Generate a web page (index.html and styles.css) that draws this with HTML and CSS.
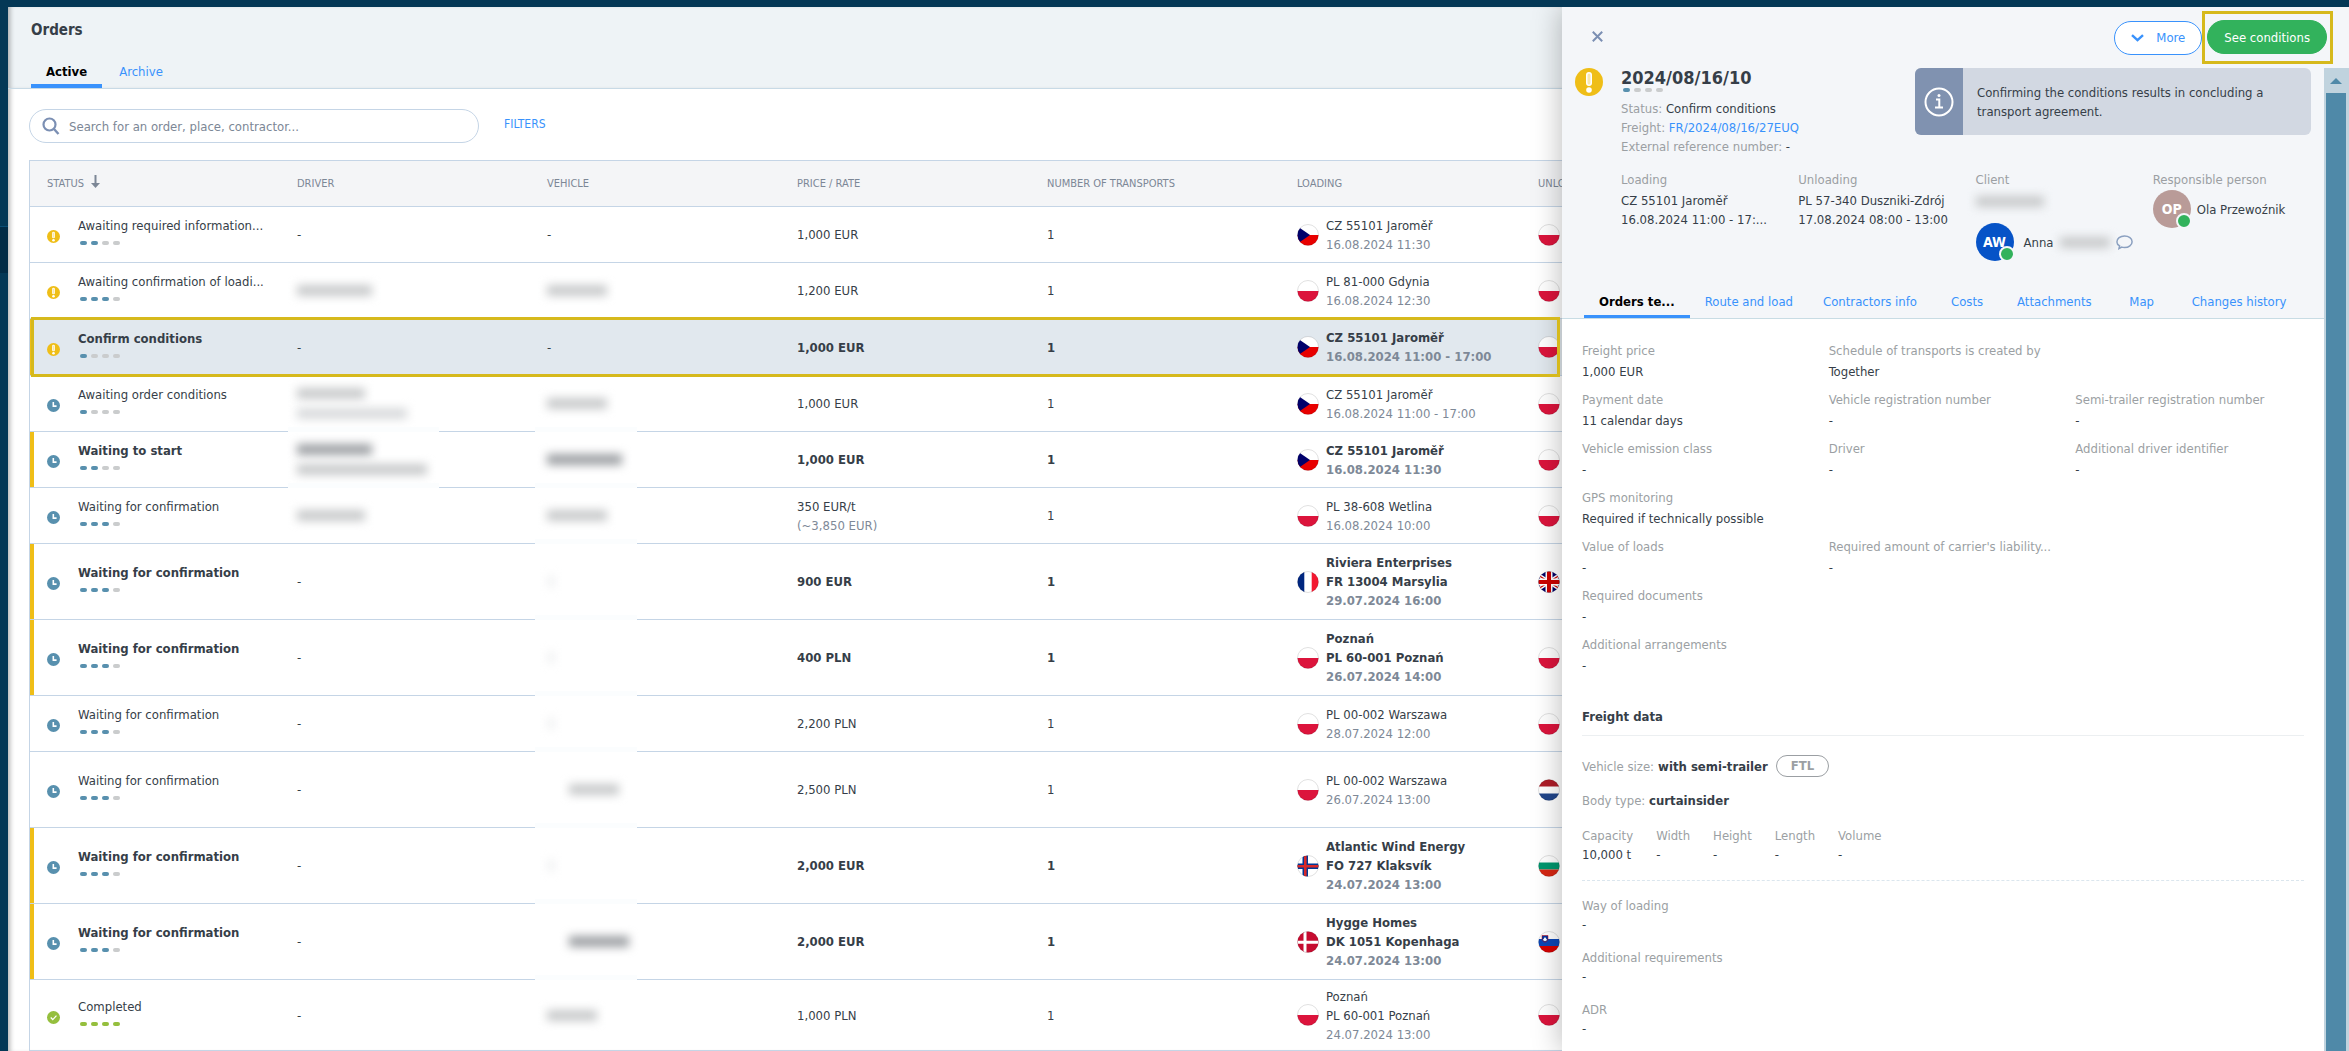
FILE: index.html
```html
<!DOCTYPE html>
<html lang="en">
<head>
    <meta charset="UTF-8">
    <meta name="viewport" content="width=device-width, initial-scale=1.0">
    <title>Orders</title>
    <link rel="stylesheet" href="styles.css">
</head>
<body>
    <!-- Shared icons and flags -->
    <svg class="sprite" aria-hidden="true">
        <defs>
            <clipPath id="round"><circle cx="11" cy="11" r="10.5"/></clipPath>
        </defs>
        <symbol id="alert" viewBox="0 0 28 28">
            <circle cx="14" cy="14" r="14" fill="#efbe17"/>
            <rect x="11" y="4" width="6" height="14" rx="3" fill="#fff"/>
            <rect x="12.500" y="5.500" width="3" height="11" rx="1.500" fill="#efbe17" opacity="0.350"/>
            <circle cx="14" cy="22" r="2.800" fill="#fff"/>
        </symbol>
        <symbol id="clock" viewBox="0 0 14 14">
            <circle cx="7" cy="7" r="7" fill="#5890ae"/>
            <path d="M6.800 3.300v4.400h3.500" fill="none" stroke="#fff" stroke-width="1.700"/>
        </symbol>
        <symbol id="done" viewBox="0 0 14 14">
            <circle cx="7" cy="7" r="7" fill="#95bf3d"/>
            <path d="M4 7l2.200 2.200L10.200 5" fill="none" stroke="#fff" stroke-width="1.300"/>
        </symbol>
        <symbol id="pl" viewBox="0 0 22 22">
            <g clip-path="url(#round)"><path fill="#fff" d="M0 0h22v11H0z"/><path fill="#dc143c" d="M0 11h22v11H0z"/></g>
            <circle cx="11" cy="11" r="10.500" fill="none" stroke="#000" stroke-opacity="0.120"/>
        </symbol>
        <symbol id="cz" viewBox="0 0 22 22">
            <g clip-path="url(#round)"><path fill="#fff" d="M0 0h22v11H0z"/><path fill="#e80000" d="M0 11h22v11H0z"/><path fill="#00006b" d="M0 2l13 9L0 20z"/></g>
            <circle cx="11" cy="11" r="10.500" fill="none" stroke="#000" stroke-opacity="0.120"/>
        </symbol>
        <symbol id="fr" viewBox="0 0 22 22">
            <g clip-path="url(#round)"><path fill="#fff" d="M0 0h22v22H0z"/><path fill="#00267f" d="M0 0h7.300v22H0z"/><path fill="#f31830" d="M14.700 0H22v22h-7.300z"/></g>
            <circle cx="11" cy="11" r="10.500" fill="none" stroke="#000" stroke-opacity="0.120"/>
        </symbol>
        <symbol id="fo" viewBox="0 0 22 22">
            <g clip-path="url(#round)"><path fill="#fff" d="M0 0h22v22H0z"/><path fill="#003897" d="M5.500 0h5.500v22H5.500zM0 8.500h22v5.500H0z"/><path fill="#d72828" d="M7 0h2.600v22H7zM0 10h22v2.600H0z"/></g>
            <circle cx="11" cy="11" r="10.500" fill="none" stroke="#000" stroke-opacity="0.120"/>
        </symbol>
        <symbol id="dk" viewBox="0 0 22 22">
            <g clip-path="url(#round)"><path fill="#c60c30" d="M0 0h22v22H0z"/><path fill="#fff" d="M6.500 0h3v22h-3zM0 9.700h22v3H0z"/></g>
            <circle cx="11" cy="11" r="10.500" fill="none" stroke="#000" stroke-opacity="0.120"/>
        </symbol>
        <symbol id="nl" viewBox="0 0 22 22">
            <g clip-path="url(#round)"><path fill="#fff" d="M0 0h22v22H0z"/><path fill="#ae1c28" d="M0 0h22v7.500H0z"/><path fill="#21468b" d="M0 14.500h22V22H0z"/></g>
            <circle cx="11" cy="11" r="10.500" fill="none" stroke="#000" stroke-opacity="0.120"/>
        </symbol>
        <symbol id="bg" viewBox="0 0 22 22">
            <g clip-path="url(#round)"><path fill="#fff" d="M0 0h22v22H0z"/><path fill="#00966e" d="M0 7.500h22v7H0z"/><path fill="#d62612" d="M0 14.500h22V22H0z"/></g>
            <circle cx="11" cy="11" r="10.500" fill="none" stroke="#000" stroke-opacity="0.120"/>
        </symbol>
        <symbol id="si" viewBox="0 0 22 22">
            <g clip-path="url(#round)"><path fill="#fff" d="M0 0h22v22H0z"/><path fill="#0c47b7" d="M0 8h22v7H0z"/><path fill="#d50000" d="M0 15h22v7H0z"/><path fill="#0033a0" stroke="#d50000" stroke-width="0.500" d="M4 4.500h6V8c0 2-3 3.200-3 3.200S4 10 4 8z"/><path fill="#fff" d="M4.800 9L7 6l2.200 3L7 10.300z"/></g>
            <circle cx="11" cy="11" r="10.500" fill="none" stroke="#000" stroke-opacity="0.120"/>
        </symbol>
        <symbol id="gb" viewBox="0 0 22 22">
            <g clip-path="url(#round)"><path fill="#006" d="M0 0h22v22H0z"/><path stroke="#fff" stroke-width="4" d="M-3 2l28 18M25 2L-3 20"/><path stroke="#c00" stroke-width="1.300" d="M-3 2l28 18M25 2L-3 20"/><path fill="#fff" d="M7.500 0h7v22h-7zM0 7.500h22v7H0z"/><path fill="#c00" d="M9 0h4v22H9zM0 9h22v4H0z"/></g>
            <circle cx="11" cy="11" r="10.500" fill="none" stroke="#000" stroke-opacity="0.120"/>
        </symbol>
    </svg>

    <aside class="side-nav"><span class="side-current"></span></aside>

    <main class="page">
        <header class="page-header">
            <h1>Orders</h1>
            <nav class="tabs">
                <a class="tab active" href="#">Active</a>
                <a class="tab" href="#">Archive</a>
            </nav>
        </header>

        <div class="toolbar">
            <label class="search">
                <svg width="18" height="18" viewBox="0 0 18 18"><circle cx="7.500" cy="7.500" r="6" fill="none" stroke="#7b8fb3" stroke-width="2.200"/><path d="M12 12l4.500 5" stroke="#7b8fb3" stroke-width="2.400"/></svg>
                <input type="text" aria-label="Search" placeholder="Search for an order, place, contractor...">
            </label>
            <a class="filters" href="#">FILTERS</a>
        </div>

        <table class="orders">
            <colgroup>
                <col class="col"><col class="col"><col class="col"><col class="col"><col class="col"><col class="col-loading"><col>
            </colgroup>
            <thead>
                <tr>
                    <th>STATUS <svg class="sort" width="11" height="14" viewBox="0 0 11 14"><path d="M5.500 0v9" stroke="#7c8796" stroke-width="2"/><path d="M1 8h9l-4.500 5z" fill="#7c8796"/></svg></th>
                    <th>DRIVER</th>
                    <th>VEHICLE</th>
                    <th>PRICE / RATE</th>
                    <th>NUMBER OF TRANSPORTS</th>
                    <th>LOADING</th>
                    <th>UNLOADING</th>
                </tr>
            </thead>
            <tbody>
                <tr>
                    <td><div class="status"><svg class="icon"><use href="#alert"/></svg><div><span>Awaiting required information...</span><div class="steps"><i class="on"></i><i class="on"></i><i></i><i></i></div></div></div></td>
                    <td>-</td>
                    <td>-</td>
                    <td>1,000 EUR</td>
                    <td>1</td>
                    <td><div class="place"><svg class="flag"><use href="#cz"/></svg><div>CZ 55101 Jaroměř<br><time>16.08.2024 11:30</time></div></div></td>
                    <td><div class="place"><svg class="flag"><use href="#pl"/></svg></div></td>
                </tr>
                <tr>
                    <td><div class="status"><svg class="icon"><use href="#alert"/></svg><div><span>Awaiting confirmation of loadi...</span><div class="steps"><i class="on"></i><i class="on"></i><i class="on"></i><i></i></div></div></div></td>
                    <td><span class="blur w75"></span></td>
                    <td><span class="blur w60"></span></td>
                    <td>1,200 EUR</td>
                    <td>1</td>
                    <td><div class="place"><svg class="flag"><use href="#pl"/></svg><div>PL 81-000 Gdynia<br><time>16.08.2024 12:30</time></div></div></td>
                    <td><div class="place"><svg class="flag"><use href="#pl"/></svg></div></td>
                </tr>
                <tr class="new selected">
                    <td><div class="status"><svg class="icon"><use href="#alert"/></svg><div><span>Confirm conditions</span><div class="steps"><i class="on"></i><i></i><i></i><i></i></div></div></div></td>
                    <td>-</td>
                    <td>-</td>
                    <td>1,000 EUR</td>
                    <td>1</td>
                    <td><div class="place"><svg class="flag"><use href="#cz"/></svg><div>CZ 55101 Jaroměř<br><time>16.08.2024 11:00 - 17:00</time></div></div></td>
                    <td><div class="place"><svg class="flag"><use href="#pl"/></svg></div></td>
                </tr>
                <tr>
                    <td><div class="status"><svg class="icon"><use href="#clock"/></svg><div><span>Awaiting order conditions</span><div class="steps"><i class="on"></i><i></i><i></i><i></i></div></div></div></td>
                    <td class="veil wide"><span class="blur w68"></span><span class="blur w110 light"></span></td>
                    <td class="veil"><span class="blur w60"></span></td>
                    <td>1,000 EUR</td>
                    <td>1</td>
                    <td><div class="place"><svg class="flag"><use href="#cz"/></svg><div>CZ 55101 Jaroměř<br><time>16.08.2024 11:00 - 17:00</time></div></div></td>
                    <td><div class="place"><svg class="flag"><use href="#pl"/></svg></div></td>
                </tr>
                <tr class="new">
                    <td><div class="status"><svg class="icon"><use href="#clock"/></svg><div><span>Waiting to start</span><div class="steps"><i class="on"></i><i class="on"></i><i></i><i></i></div></div></div></td>
                    <td class="veil wide"><span class="blur w75 dark"></span><span class="blur w130"></span></td>
                    <td class="veil"><span class="blur w75 dark"></span></td>
                    <td>1,000 EUR</td>
                    <td>1</td>
                    <td><div class="place"><svg class="flag"><use href="#cz"/></svg><div>CZ 55101 Jaroměř<br><time>16.08.2024 11:30</time></div></div></td>
                    <td><div class="place"><svg class="flag"><use href="#pl"/></svg></div></td>
                </tr>
                <tr>
                    <td><div class="status"><svg class="icon"><use href="#clock"/></svg><div><span>Waiting for confirmation</span><div class="steps"><i class="on"></i><i class="on"></i><i class="on"></i><i></i></div></div></div></td>
                    <td><span class="blur w68"></span></td>
                    <td class="veil"><span class="blur w60"></span></td>
                    <td>350 EUR/t<br><small>(~3,850 EUR)</small></td>
                    <td>1</td>
                    <td><div class="place"><svg class="flag"><use href="#pl"/></svg><div>PL 38-608 Wetlina<br><time>16.08.2024 10:00</time></div></div></td>
                    <td><div class="place"><svg class="flag"><use href="#pl"/></svg></div></td>
                </tr>
                <tr class="new tall">
                    <td><div class="status"><svg class="icon"><use href="#clock"/></svg><div><span>Waiting for confirmation</span><div class="steps"><i class="on"></i><i class="on"></i><i class="on"></i><i></i></div></div></div></td>
                    <td>-</td>
                    <td class="veil"><span class="blur dot"></span></td>
                    <td>900 EUR</td>
                    <td>1</td>
                    <td><div class="place"><svg class="flag"><use href="#fr"/></svg><div>Riviera Enterprises<br>FR 13004 Marsylia<br><time>29.07.2024 16:00</time></div></div></td>
                    <td><div class="place"><svg class="flag"><use href="#gb"/></svg></div></td>
                </tr>
                <tr class="new tall">
                    <td><div class="status"><svg class="icon"><use href="#clock"/></svg><div><span>Waiting for confirmation</span><div class="steps"><i class="on"></i><i class="on"></i><i class="on"></i><i></i></div></div></div></td>
                    <td>-</td>
                    <td class="veil"><span class="blur dot"></span></td>
                    <td>400 PLN</td>
                    <td>1</td>
                    <td><div class="place"><svg class="flag"><use href="#pl"/></svg><div>Poznań<br>PL 60-001 Poznań<br><time>26.07.2024 14:00</time></div></div></td>
                    <td><div class="place"><svg class="flag"><use href="#pl"/></svg></div></td>
                </tr>
                <tr>
                    <td><div class="status"><svg class="icon"><use href="#clock"/></svg><div><span>Waiting for confirmation</span><div class="steps"><i class="on"></i><i class="on"></i><i class="on"></i><i></i></div></div></div></td>
                    <td>-</td>
                    <td class="veil"><span class="blur dot"></span></td>
                    <td>2,200 PLN</td>
                    <td>1</td>
                    <td><div class="place"><svg class="flag"><use href="#pl"/></svg><div>PL 00-002 Warszawa<br><time>28.07.2024 12:00</time></div></div></td>
                    <td><div class="place"><svg class="flag"><use href="#pl"/></svg></div></td>
                </tr>
                <tr class="tall">
                    <td><div class="status"><svg class="icon"><use href="#clock"/></svg><div><span>Waiting for confirmation</span><div class="steps"><i class="on"></i><i class="on"></i><i class="on"></i><i></i></div></div></div></td>
                    <td>-</td>
                    <td class="veil"><span class="blur w50 indent"></span></td>
                    <td>2,500 PLN</td>
                    <td>1</td>
                    <td><div class="place"><svg class="flag"><use href="#pl"/></svg><div>PL 00-002 Warszawa<br><time>26.07.2024 13:00</time></div></div></td>
                    <td><div class="place"><svg class="flag"><use href="#nl"/></svg></div></td>
                </tr>
                <tr class="new tall">
                    <td><div class="status"><svg class="icon"><use href="#clock"/></svg><div><span>Waiting for confirmation</span><div class="steps"><i class="on"></i><i class="on"></i><i class="on"></i><i></i></div></div></div></td>
                    <td>-</td>
                    <td class="veil"><span class="blur dot"></span></td>
                    <td>2,000 EUR</td>
                    <td>1</td>
                    <td><div class="place"><svg class="flag"><use href="#fo"/></svg><div>Atlantic Wind Energy<br>FO 727 Klaksvík<br><time>24.07.2024 13:00</time></div></div></td>
                    <td><div class="place"><svg class="flag"><use href="#bg"/></svg></div></td>
                </tr>
                <tr class="new tall">
                    <td><div class="status"><svg class="icon"><use href="#clock"/></svg><div><span>Waiting for confirmation</span><div class="steps"><i class="on"></i><i class="on"></i><i class="on"></i><i></i></div></div></div></td>
                    <td>-</td>
                    <td class="veil"><span class="blur w60 indent dark"></span></td>
                    <td>2,000 EUR</td>
                    <td>1</td>
                    <td><div class="place"><svg class="flag"><use href="#dk"/></svg><div>Hygge Homes<br>DK 1051 Kopenhaga<br><time>24.07.2024 13:00</time></div></div></td>
                    <td><div class="place"><svg class="flag"><use href="#si"/></svg></div></td>
                </tr>
                <tr class="done">
                    <td><div class="status"><svg class="icon"><use href="#done"/></svg><div><span>Completed</span><div class="steps"><i class="on"></i><i class="on"></i><i class="on"></i><i class="on"></i></div></div></div></td>
                    <td>-</td>
                    <td><span class="blur w50"></span></td>
                    <td>1,000 PLN</td>
                    <td>1</td>
                    <td><div class="place"><svg class="flag"><use href="#pl"/></svg><div>Poznań<br>PL 60-001 Poznań<br><time>24.07.2024 13:00</time></div></div></td>
                    <td><div class="place"><svg class="flag"><use href="#pl"/></svg></div></td>
                </tr>
            </tbody>
        </table>
    </main>

    <section class="drawer">
        <div class="drawer-bar">
            <button class="close" type="button" aria-label="Close"><svg width="11" height="11" viewBox="0 0 11 11"><path d="M0.800 0.800l9.400 9.400M10.200 0.800L0.800 10.200" stroke="#7b8fb3" stroke-width="2"/></svg></button>
            <div class="actions">
                <button class="btn btn-more" type="button"><svg width="13" height="8" viewBox="0 0 13 8"><path d="M1 1.200l5.500 5 5.500-5" fill="none" stroke="#3992fc" stroke-width="2.400"/></svg>More</button>
                <div class="callout"><button class="btn btn-primary" type="button">See conditions</button></div>
            </div>
        </div>

        <div class="drawer-main">
            <div class="drawer-content">
                <div class="summary">
                    <div class="summary-top">
                        <svg class="big-alert"><use href="#alert"/></svg>
                        <div class="order-info">
                            <h2>2024/08/16/10</h2>
                            <div class="steps"><i class="on"></i><i></i><i></i><i></i></div>
                            <p><span class="muted">Status:</span> Confirm conditions</p>
                            <p><span class="muted">Freight:</span> <a href="#">FR/2024/08/16/27EUQ</a></p>
                            <p><span class="muted">External reference number:</span> -</p>
                        </div>
                        <div class="notice">
                            <div class="notice-icon"><svg width="30" height="30" viewBox="0 0 30 30"><circle cx="15" cy="15" r="13.500" fill="none" stroke="#fff" stroke-width="2"/><circle cx="15" cy="8.500" r="1.500" fill="#fff"/><path d="M12 12.500h3.300v7.500M11 20.500h8" fill="none" stroke="#fff" stroke-width="2"/></svg></div>
                            <p>Confirming the conditions results in concluding a transport agreement.</p>
                        </div>
                    </div>
                    <div class="parties">
                        <div>
                            <p class="muted">Loading</p>
                            <p class="value">CZ 55101 Jaroměř<br>16.08.2024 11:00 - 17:...</p>
                        </div>
                        <div>
                            <p class="muted">Unloading</p>
                            <p class="value">PL 57-340 Duszniki-Zdrój<br>17.08.2024 08:00 - 13:00</p>
                        </div>
                        <div>
                            <p class="muted">Client</p>
                            <span class="blur w68 client-name"></span>
                            <div class="person">
                                <span class="avatar blue">AW</span>
                                <span>Anna</span>
                                <span class="blur w50"></span>
                                <svg class="chat" width="17" height="15" viewBox="0 0 17 15"><path d="M3 13.500l0.600-2.600C1.800 9.900 0.900 8.400 0.900 6.900 0.900 3.600 4.200 1 8.500 1s7.600 2.500 7.600 5.700-3.300 5.800-7.600 5.800c-1 0-1.900-0.100-2.700-0.400z" fill="none" stroke="#8ba0c0" stroke-width="1.500"/></svg>
                            </div>
                        </div>
                        <div>
                            <p class="muted">Responsible person</p>
                            <div class="person responsible">
                                <span class="avatar rose">OP</span>
                                <span>Ola Przewoźnik</span>
                            </div>
                        </div>
                    </div>
                    <nav class="detail-tabs">
                        <a class="active" href="#">Orders te...</a>
                        <a href="#">Route and load</a>
                        <a href="#">Contractors info</a>
                        <a href="#">Costs</a>
                        <a href="#">Attachments</a>
                        <a href="#">Map</a>
                        <a href="#">Changes history</a>
                    </nav>
                </div>

                <div class="details">
                    <dl class="fields">
                        <div><dt>Freight price</dt><dd>1,000 EUR</dd></div>
                        <div class="span2"><dt>Schedule of transports is created by</dt><dd>Together</dd></div>
                        <div><dt>Payment date</dt><dd>11 calendar days</dd></div>
                        <div><dt>Vehicle registration number</dt><dd>-</dd></div>
                        <div><dt>Semi-trailer registration number</dt><dd>-</dd></div>
                        <div><dt>Vehicle emission class</dt><dd>-</dd></div>
                        <div><dt>Driver</dt><dd>-</dd></div>
                        <div><dt>Additional driver identifier</dt><dd>-</dd></div>
                        <div class="span3"><dt>GPS monitoring</dt><dd>Required if technically possible</dd></div>
                        <div><dt>Value of loads</dt><dd>-</dd></div>
                        <div class="span2"><dt>Required amount of carrier's liability...</dt><dd>-</dd></div>
                        <div class="span3"><dt>Required documents</dt><dd>-</dd></div>
                        <div class="span3"><dt>Additional arrangements</dt><dd>-</dd></div>
                    </dl>

                    <h3>Freight data</h3>
                    <p class="vehicle"><span class="muted">Vehicle size:</span> <b>with semi-trailer</b> <span class="pill">FTL</span></p>
                    <p class="body-type"><span class="muted">Body type:</span> <b>curtainsider</b></p>
                    <dl class="sizes">
                        <div><dt>Capacity</dt><dd>10,000 t</dd></div>
                        <div><dt>Width</dt><dd>-</dd></div>
                        <div><dt>Height</dt><dd>-</dd></div>
                        <div><dt>Length</dt><dd>-</dd></div>
                        <div><dt>Volume</dt><dd>-</dd></div>
                    </dl>
                    <dl class="extras">
                        <div><dt>Way of loading</dt><dd>-</dd></div>
                        <div><dt>Additional requirements</dt><dd>-</dd></div>
                        <div><dt>ADR</dt><dd>-</dd></div>
                    </dl>
                </div>
            </div>
            <div class="scrollbar">
                <svg width="25" height="25" viewBox="0 0 25 25"><path d="M6 16l6-6 6 6z" fill="#4f89a8"/></svg>
                <div class="thumb"></div>
            </div>
        </div>
    </section>
</body>
</html>
```
FILE: styles.css
```css
*, *::after {
    box-sizing: border-box;
}

/* Basic styling for the page */
body {
    display: flex;
    height: 100vh;
    margin: 0;
    padding-top: 7px;
    overflow: hidden;
    background-color: #043856;
    color: #363e48;
    font-family: "DejaVu Sans Condensed", "DejaVu Sans", sans-serif;
    font-size: 13px;
    line-height: 19px;
}

h1, h2, h3, p, dl, dd {
    margin: 0;
}

a {
    color: #3992fc;
    text-decoration: none;
}

button, input {
    font: inherit;
}

.sprite {
    position: absolute;
    width: 0;
    height: 0;
}

.muted, dt {
    color: #9b9fa3;
}

/* Navigation strip on the left */
.side-nav {
    width: 8px;
    flex: none;
    padding-top: 219px;
}

.side-current {
    display: block;
    height: 47px;
    border-top: 1px solid #0a4d74;
    background-color: #022b45;
}

/* Orders page */
.page {
    flex: 1;
    min-width: 0;
    overflow: hidden;
    background-color: #fff;
    box-shadow: inset 5px 0 5px -3px rgba(0, 0, 0, 0.3);
}

.page-header {
    padding: 14px 23px 0;
    border-bottom: 1px solid #c8dae6;
    background-color: #eef3f6;
    box-shadow: inset 5px 0 5px -3px rgba(0, 0, 0, 0.3);
}

.page-header h1 {
    font-size: 15px;
    line-height: 19px;
}

.tabs {
    display: flex;
    gap: 2px;
    margin-top: 20px;
}

.tab {
    padding: 2px 15px 3px;
    line-height: 19px;
    border-bottom: 4px solid transparent;
}

.tab.active {
    border-color: #3992fc;
    color: #000;
    font-weight: bold;
}

.toolbar {
    display: flex;
    align-items: center;
    gap: 25px;
    padding: 20px 21px 17px;
}

.search {
    display: flex;
    align-items: center;
    gap: 9px;
    width: 450px;
    height: 34px;
    padding: 0 12px;
    border: 1px solid #c5d5e6;
    border-radius: 17px;
}

.search input {
    flex: 1;
    padding: 0;
    border: none;
    outline: none;
    background: none;
    color: #363e48;
}

.search input::placeholder {
    color: #7c8796;
    opacity: 1;
}

.filters {
    padding-bottom: 4px;
    font-size: 12px;
}

/* Orders table */
.orders {
    width: calc(100% - 21px);
    margin-left: 21px;
    border: 1px solid #c5d5e6;
    border-bottom: none;
    border-spacing: 0;
    table-layout: fixed;
}

.col {
    width: 250px;
}

.col-loading {
    width: 241px;
}

th {
    height: 46px;
    padding: 0 17px;
    border-bottom: 1px solid #c5d5e6;
    background-color: #f4f5f7;
    color: #7c8796;
    font-size: 11px;
    font-weight: normal;
    text-align: left;
}

.sort {
    margin-left: 3px;
    vertical-align: -2px;
}

td {
    position: relative;
    height: 56px;
    padding: 0 17px;
    border-bottom: 1px solid #c5d5e6;
}

.tall td {
    height: 76px;
}

.done td {
    height: 71px;
}

.new td {
    font-weight: bold;
}

.new td:nth-child(2),
.new td:nth-child(3) {
    font-weight: normal;
}

.new td:first-child {
    box-shadow: inset 4px 0 #efbe17;
}

.selected td {
    height: 57px;
    background-color: #e1e8ee;
}

/* Frame round the selected order */
.selected td:first-child::after {
    content: "";
    position: absolute;
    z-index: 2;
    top: -2px;
    left: 1px;
    width: calc(100vw - 820px);
    height: 60px;
    border: 3px solid #d6b91c;
}

td time, td small {
    color: #7e8997;
    font-size: 13px;
}

.status {
    display: flex;
    align-items: center;
    gap: 18px;
}

.status span {
    display: block;
    white-space: nowrap;
}

.status .steps {
    margin: 6px 0 8px 2px;
}

.icon {
    flex: none;
    width: 13px;
    height: 13px;
    margin-top: 4px;
}

.steps {
    display: flex;
    gap: 4px;
}

.steps i {
    width: 7px;
    height: 4px;
    border-radius: 2px;
    background-color: #cacccd;
}

.steps .on {
    background-color: #5890ae;
}

.done .steps .on {
    background-color: #95bf3d;
}

.place {
    display: flex;
    align-items: center;
    gap: 7px;
    white-space: nowrap;
}

.flag {
    flex: none;
    width: 22px;
    height: 22px;
}

/* Hidden personal data */
.blur {
    display: block;
    height: 11px;
    background-color: #c8cacb;
    filter: blur(5px);
}

.blur + .blur {
    margin-top: 9px;
}

.blur.dark {
    background-color: #9da0a4;
}

.blur.light {
    background-color: #d8dadc;
}

.blur.indent {
    margin-left: 22px;
}

.blur.dot {
    width: 8px;
    background-color: #f0f1f2;
}

.w50 {
    width: 50px;
}

.w60 {
    width: 60px;
}

.w68 {
    width: 68px;
}

.w75 {
    width: 75px;
}

.w110 {
    width: 110px;
}

.w130 {
    width: 130px;
}

.veil::after {
    content: "";
    position: absolute;
    bottom: -1px;
    left: 5px;
    width: 102px;
    height: 5px;
    background-color: #fbfdfe;
}

.veil.wide::after {
    left: 8px;
    width: 151px;
}

/* Order drawer */
.drawer {
    position: absolute;
    z-index: 1;
    top: 7px;
    right: 0;
    bottom: 0;
    display: flex;
    flex-direction: column;
    width: 787px;
    background-color: #f4f6f9;
    box-shadow: -2px 0 26px rgba(0, 0, 0, 0.25);
    clip-path: inset(0 0 0 -40px);
}

.drawer-bar {
    display: flex;
    align-items: flex-start;
    justify-content: space-between;
    height: 61px;
    padding: 4px 16px 0 30px;
}

.close {
    margin-top: 20px;
    padding: 0;
    border: none;
    background: none;
    line-height: 11px;
    cursor: pointer;
}

.actions {
    display: flex;
    align-items: center;
}

.callout {
    padding: 6px 3px 7px 2px;
    border: 3px solid #d6b91c;
}

.btn {
    height: 34px;
    border: 1px solid #3992fc;
    border-radius: 17px;
    cursor: pointer;
}

.btn-more {
    display: flex;
    align-items: center;
    gap: 12px;
    padding: 0 16px;
    background-color: #fff;
    color: #3992fc;
}

.btn-primary {
    padding: 0 16px;
    border-color: #32b25c;
    background-color: #32b25c;
    color: #fff;
}

.drawer-main {
    display: flex;
    flex: 1;
    min-height: 0;
}

.drawer-content {
    flex: 1;
    overflow: hidden;
    background-color: #fff;
}

.summary {
    background-color: #f4f6f9;
    border-bottom: 1px solid #c8dce4;
}

.summary-top {
    display: flex;
    align-items: flex-start;
    height: 102px;
    padding: 0 13px;
}

.big-alert {
    flex: none;
    width: 28px;
    height: 28px;
    margin-right: 18px;
}

.order-info {
    flex: 1;
}

.order-info h2 {
    font-size: 18px;
    line-height: 20px;
}

.order-info .steps {
    margin: 0 0 7px 2px;
}

.notice {
    display: flex;
    width: 396px;
    height: 67px;
    border-radius: 6px;
    overflow: hidden;
    background-color: #d2d8e2;
}

.notice-icon {
    display: flex;
    flex: none;
    align-items: center;
    justify-content: center;
    width: 48px;
    background-color: #8092b0;
}

.notice p {
    align-self: center;
    padding: 0 14px;
}

.parties {
    display: grid;
    grid-template-columns: repeat(4, 1fr);
    height: 119px;
    margin-right: -6px;
    padding-left: 59px;
    white-space: nowrap;
}

.parties .value {
    margin-top: 2px;
}

.client-name {
    margin-top: 7px;
}

.person {
    display: flex;
    align-items: center;
    gap: 10px;
    margin-top: 16px;
}

.person .blur {
    margin: 0 -4px;
}

.person.responsible {
    gap: 6px;
    margin-top: 1px;
}

.avatar {
    position: relative;
    width: 38px;
    height: 38px;
    border-radius: 50%;
    color: #fff;
    font-size: 14px;
    font-weight: bold;
    line-height: 38px;
    text-align: center;
}

.avatar::after {
    content: "";
    position: absolute;
    right: -1px;
    bottom: -1px;
    width: 16px;
    height: 16px;
    border: 2px solid #f4f6f9;
    border-radius: 50%;
    background-color: #32b25c;
}

.blue {
    background-color: #0653c7;
}

.rose {
    background-color: #b99b98;
}

.detail-tabs {
    display: flex;
    padding: 0 22px;
}

.detail-tabs a {
    min-width: 70px;
    padding: 3px 15px 4px;
    border-bottom: 3px solid transparent;
    text-align: center;
    white-space: nowrap;
}

.detail-tabs .active {
    border-color: #3992fc;
    color: #000;
    font-weight: bold;
}

.details {
    padding: 22px 20px 0;
}

.fields {
    display: grid;
    grid-template-columns: repeat(3, 1fr);
    row-gap: 9px;
    margin-right: -18px;
    white-space: nowrap;
}

.fields dd {
    margin-top: 2px;
}

.span2 {
    grid-column: span 2;
}

.span3 {
    grid-column: span 3;
}

.details h3 {
    margin-top: 32px;
    padding-bottom: 9px;
    border-bottom: 1px solid #eceff1;
    font-size: 13px;
}

.vehicle {
    display: flex;
    align-items: center;
    gap: 4px;
    margin-top: 19px;
}

.pill {
    height: 22px;
    margin-left: 4px;
    padding: 0 14px;
    border: 1px solid #9b9fa3;
    border-radius: 11px;
    color: #9b9fa3;
    font-weight: bold;
    line-height: 20px;
}

.body-type {
    margin-top: 14px;
}

.sizes {
    display: flex;
    gap: 23px;
    margin-top: 16px;
    padding-bottom: 16px;
    border-bottom: 1px dashed #dbe6ee;
}

.extras {
    display: flex;
    flex-direction: column;
    gap: 14px;
    margin-top: 15px;
}

.scrollbar {
    display: flex;
    flex-direction: column;
    width: 25px;
    background-color: #c0d3de;
}

.thumb {
    flex: 1;
    margin: 0 3px 0 2px;
    background-color: #4f89a8;
}
```
